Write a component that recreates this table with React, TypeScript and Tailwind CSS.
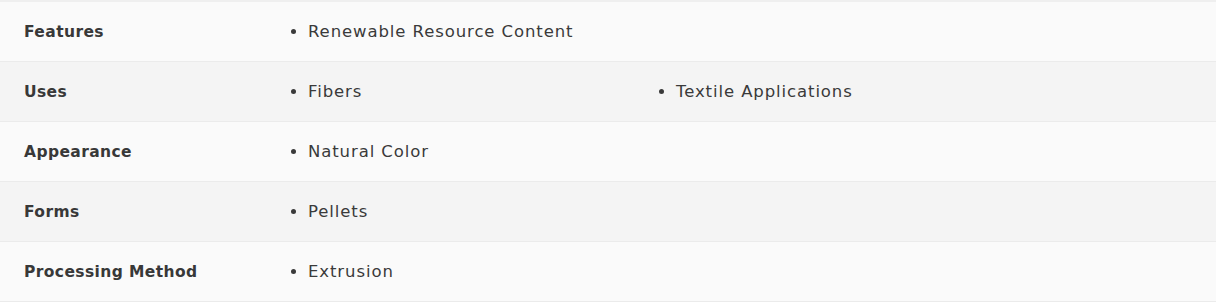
const rows: { label: string; values: string[] }[] = [
  { label: "Features", values: ["Renewable Resource Content"] },
  { label: "Uses", values: ["Fibers", "Textile Applications"] },
  { label: "Appearance", values: ["Natural Color"] },
  { label: "Forms", values: ["Pellets"] },
  { label: "Processing Method", values: ["Extrusion"] },
];

export default function App() {
  return (
    <div className="min-h-[306px] bg-white font-['DejaVu_Sans',sans-serif] text-[#3a3a3a]">
      <div className="border-t-2 border-[#efefef]">
        {rows.map((row, i) => (
          <div
            key={row.label}
            className={`flex h-[60px] items-center border-b border-[#ebebeb] pt-[2px] ${
              i % 2 === 0 ? "bg-[#fafafa]" : "bg-[#f4f4f4]"
            }`}
          >
            <div className="w-[266px] shrink-0 pl-6 text-[15.5px] font-bold tracking-[0.4px] text-[#383838]">
              {row.label}
            </div>
            <ul className="grid flex-1 grid-cols-[368px_368px] list-disc pl-[42px] text-[16.5px] tracking-[0.9px] marker:text-[#3a3a3a]">
              {row.values.map((v) => (
                <li key={v}>{v}</li>
              ))}
            </ul>
          </div>
        ))}
      </div>
    </div>
  );
}
